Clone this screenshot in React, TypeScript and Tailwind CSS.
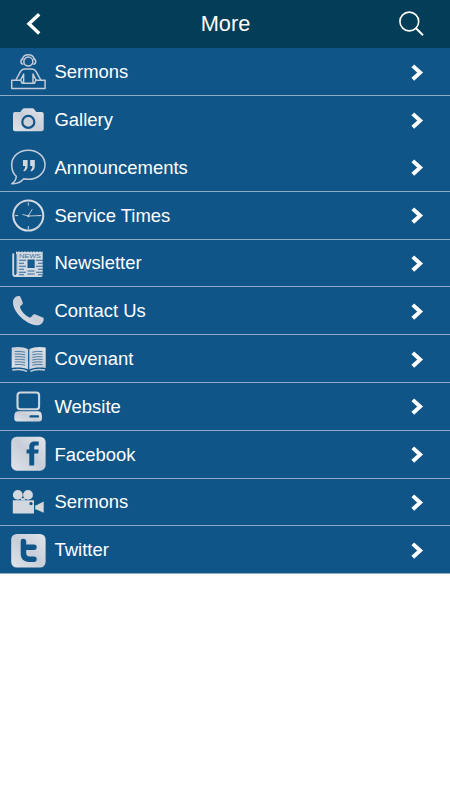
// "More" screen listing the remaining sections of the app
import React from 'react';

interface MenuItem {
  label: string;
  icon: React.ReactNode;
  divider?: boolean;
}

const FILL = 'url(#silver)';

const menuItems: MenuItem[] = [
  {
    label: 'Sermons',
    divider: true,
    icon: (
      <g fill="none" stroke="#c3ccd8" strokeWidth="1.5" strokeLinejoin="round">
        <circle cx="18.3" cy="7.6" r="4.5" />
        <path d="M12.2 5.4C13 2.200 15 .7 18.3 .7s5.300 1.500 6.100 4.700" />
        <path d="M13.400 4.900c-1.800 0-2.500 1.200-2.500 2.700s.7 2.700 2.500 2.700M23.200 4.900c1.800 0 2.500 1.200 2.500 2.700s-.7 2.700-2.500 2.700" />
        <path d="M5.800 26 10.600 17.400c.9-1.600 2.100-2.500 3.900-2.500h7.600c1.800 0 3 .9 3.900 2.500L30.800 26" />
        <path d="M13.600 19.500v9.800h9.400v-9.800M13.400 20.500 10.600 26l1.600 3.300h1.400M23.200 20.500 26 26l-1.600 3.300H23" />
        <path d="M11 26.300H1.700v8.100h33.400v-8.100h-9.300" />
      </g>
    ),
  },
  {
    label: 'Gallery',
    icon: (
      <g>
        <path
          fill={FILL}
          d="M5 10h5.300l2.300-3c.5-.6.9-.8 1.600-.8h8.200c.7 0 1.100.2 1.600.8l2.300 3h5.200c1.400 0 2.200.8 2.200 2.200v14.800c0 1.400-.8 2.200-2.200 2.200H5.200c-1.400 0-2.200-.8-2.200-2.200V12.200C3 10.800 3.600 10 5 10Z"
        />
        <circle cx="18.3" cy="19.9" r="6" fill="none" stroke="#0f5588" strokeWidth="2.2" />
      </g>
    ),
  },
  {
    label: 'Announcements',
    divider: true,
    icon: (
      <g>
        <path
          fill="none"
          stroke="#c3ccd8"
          strokeWidth="1.5"
          strokeLinejoin="round"
          d="M18.3 1.200C27.800 1.200 35 7.500 35 15.700S27.800 30.300 18.300 30.300c-1.600 0-3-.1-4.500-.5C11 33 6.500 35 1.800 34.700c2.700-1.700 4.300-4 4.500-7.400C3.200 24.600 1.700 20.800 1.700 16 1.700 7.500 8.800 1.200 18.300 1.200Z"
        />
        <path
          fill="#d3d8df"
          d="M13 11h4.600v5.500c0 3.300-1 5-3.600 6l-.7-1.300c1.300-.8 1.900-2 1.900-4.200H13ZM20.200 11h4.600v5.500c0 3.300-1 5-3.600 6l-.7-1.300c1.300-.8 1.900-2 1.900-4.200h-2.200Z"
        />
      </g>
    ),
  },
  {
    label: 'Service Times',
    divider: true,
    icon: (
      <g fill="none" stroke="#c8d1da">
        <circle cx="18.3" cy="18.6" r="15" stroke={FILL} strokeWidth="2" />
        <path strokeWidth="1" d="M18.3 5.600v3M18.300 29v3M5.200 18.600h3M28.500 18.600h3" />
        <path strokeWidth=".9" d="m12.500 17.500 6 1.500 11-.4M17.500 20l4.800-7.800" />
        <circle cx="18.4" cy="19" r=".8" fill="#c8d1da" />
      </g>
    ),
  },
  {
    label: 'Newsletter',
    divider: true,
    icon: (
      <g>
        <path
          fill="#d0d9e2"
          d="M6 6.300l1.500 1 1.500-1 1.500 1 1.500-1 1.500 1 1.500-1 1.500 1 1.500-1 1.500 1 1.500-1 1.500 1 1.500-1 1.500 1 1.500-1 1.500 1 1.500-1 1.500 1 1.200-1v23.500c0 1.500-.7 2.200-2 2.200H5.200C3.200 32 2.300 31 2.300 29V8.500h2V29c0 1.500 1.700 1.500 1.700 0Z"
        />
        <text x="9" y="12.600" fontSize="5" textLength="22" lengthAdjust="spacingAndGlyphs" fill="#3d739c">
          NEWS
        </text>
        <path
          stroke="#32699a"
          strokeWidth="1.100"
          d="M9 15.200h7M9 18.200h5M9 21.200h7M9 24.200h5M9 27.200h7M9 29.800h5M26 15.200h7M28 18.200h5M26 21.200h7M28 24.200h5M26 27.200h7M28 29.800h5M17.500 26h7M17.500 29h7"
        />
        <path fill="#175b8d" d="M17.500 14.500h7.200v8.500h-7.200Z" />
        <path stroke="#286494" strokeWidth=".8" d="M6.700 9v20M4.700 9v20" />
      </g>
    ),
  },
  {
    label: 'Contact Us',
    divider: true,
    icon: (
      <path
        fill={FILL}
        d="M4.200 5.500C5.500 3.800 7.300 3 9 3.100c.7 0 1.200.4 1.500 1l2.200 5.300c.3.800.1 1.400-.5 2l-1.700 1.700c-.5.500-.6 1.100-.3 1.800 2 4.400 4.800 7.300 9.300 9.500.6.300 1.200.2 1.600-.3l2-2.400c.5-.6 1.200-.7 1.900-.4l7.700 3.200c.8.400 1.100 1 1 1.900-.5 3.600-3.600 6.100-7.300 5.900C17 31.600 3.200 20 3 9.500c0-1.600.3-2.900 1.200-4Z"
      />
    ),
  },
  {
    label: 'Covenant',
    divider: true,
    icon: (
      <g>
        <path
          fill={FILL}
          d="M1.700 6.500C8 5.500 14 5.900 18.100 8.200v20.400c-4.400-2-10-2.400-16.400-1.600ZM35.700 6.500c-6.300-1-12.300-.6-16.400 1.700v20.400c4.400-2 10-2.400 16.400-1.600Z"
        />
        <path fill="none" stroke="#c3ccd8" strokeWidth="1.500" d="M2.300 29c6.200-.8 11.200-.5 14.700 1.400M35 29c-6.200-.8-11.200-.5-14.700 1.400" />
        <path
          fill="none"
          stroke="#4e7ea5"
          strokeWidth="1"
          d="M4.800 10.600q5.500-.7 10.300.6M4.800 13.200q5.500-.7 10.300.6M4.800 15.800q5.500-.7 10.300.6M4.800 18.400q5.500-.7 10.300.6M4.800 21q5.500-.7 10.300.6M4.800 23.600q5.500-.7 10.300.6M32.600 10.600q-5.500-.7-10.300.6M32.600 13.200q-5.500-.7-10.300.6M32.600 15.800q-5.500-.7-10.300.6M32.600 18.400q-5.500-.7-10.300.6M32.600 21q-5.500-.7-10.300.6M32.600 23.600q-5.500-.7-10.300.6"
        />
      </g>
    ),
  },
  {
    label: 'Website',
    divider: true,
    icon: (
      <g>
        <rect x="7.500" y="4.500" width="21.600" height="16.800" rx="2.800" fill="none" stroke="#d2d7de" strokeWidth="2.100" />
        <path
          fill={FILL}
          fillRule="evenodd"
          d="M8 23.200h20.300c3 0 3.700 3 3.700 5.600v1.700c0 2-1 3-3 3H7.300c-2 0-3-1-3-3v-1.700c0-2.600.7-5.600 3.700-5.600Zm12.500 4c-1.500 0-1.500 2.400 0 2.400H28c1.500 0 1.500-2.400 0-2.400Z"
        />
      </g>
    ),
  },
  {
    label: 'Facebook',
    divider: true,
    icon: (
      <g>
        <rect x="1.200" y=".7" width="34.400" height="34" rx="5.500" fill={FILL} />
        <path
          fill="#0f5588"
          d="M19.300 29.400V17.500h-2.700v-4h2.700v-2.800c0-3.700 2-5.300 5.300-5.300h4.100v4.100h-2.600c-1.400 0-1.900.5-1.900 1.700v2.300h4.500l-.5 4h-4v11.900Z"
        />
      </g>
    ),
  },
  {
    label: 'Sermons',
    divider: true,
    icon: (
      <g fill="#d3d8df">
        <circle cx="7.800" cy="10.900" r="4.900" />
        <circle cx="18" cy="10.900" r="4.900" />
        <path d="M11 14.200h4v2h-4Z" />
        <path
          fillRule="evenodd"
          d="M2.800 16.200H24v13.300H2.800ZM21 17.900a1.700 1.700 0 1 0 0 3.400 1.700 1.700 0 0 0 0-3.400Z"
        />
        <path d="M25.200 21.300h1.200L33.700 17.500v11.200L26.400 25.500h-1.200Z" />
      </g>
    ),
  },
  {
    label: 'Twitter',
    divider: true,
    icon: (
      <g>
        <rect x="1.200" y="2" width="34.400" height="33.500" rx="5.500" fill={FILL} />
        <path
          fill="#0f5588"
          d="M10.700 9.200c0-1.700 1-2.500 2.700-2.500s2.800.9 2.800 2.600v3.300h7.900c1.700 0 2.600 1 2.600 2.700s-.9 2.700-2.600 2.700h-7.900v2.600c0 2.600 1 3.900 3.700 3.900h4.200c1.700 0 2.600 1 2.600 2.700s-.9 2.800-2.600 2.800h-5c-5.400 0-8.400-3.200-8.400-8.400Z"
        />
      </g>
    ),
  },
];

const MenuRow: React.FC<{ item: MenuItem }> = ({ item }) => (
  <li
    className={`flex h-[47.8px] items-center border-b pl-2.5 pr-[26px] ${
      item.divider ? 'border-[#8eabc5]' : 'border-transparent'
    }`}
  >
    <svg viewBox="0 0 36 36" className="size-9 shrink-0 overflow-visible">
      {item.icon}
    </svg>
    <span className="ml-[8.5px] flex-1 pt-px text-[18.45px] leading-6 text-white">{item.label}</span>
    <svg viewBox="0 0 14 18" className="h-[18px] w-3.5 translate-y-[0.5px]" fill="none" stroke="white" strokeWidth="4">
      <path d="m2.800 2.400 7.300 6.700-7.300 6.700" />
    </svg>
  </li>
);

export default function App() {
  return (
    <div className="min-h-screen bg-white font-['Liberation_Sans',Arial,sans-serif]">
      <svg className="absolute size-0">
        <defs>
          <linearGradient id="silver" x1="0" y1="1" x2="1" y2="0">
            <stop offset="0" stopColor="#e0e4ea" />
            <stop offset=".5" stopColor="#c8ced8" />
            <stop offset="1" stopColor="#e2e6eb" />
          </linearGradient>
        </defs>
      </svg>

      <header className="flex h-12 items-center justify-between bg-[#033d58] pl-[26px] pr-[25px] text-white">
        <button className="w-7">
          <svg viewBox="0 0 16 24" className="h-6 w-4" fill="none" stroke="white" strokeWidth="3.400">
            <path d="M13.200 2.200 3 11.800l10.200 9.600" />
          </svg>
        </button>
        <h1 className="text-[21.800px] leading-none">More</h1>
        <button className="w-7">
          <svg viewBox="0 0 28 28" className="size-7" fill="none" stroke="white" strokeWidth="1.600">
            <circle cx="12.300" cy="11.500" r="9.400" />
            <path d="m19 18.200 7 7" strokeWidth="2" />
          </svg>
        </button>
      </header>

      <ul className="bg-[#0f5588] pt-[0.4px]">
        {menuItems.map((item, i) => (
          <MenuRow key={i} item={item} />
        ))}
      </ul>
    </div>
  );
}
